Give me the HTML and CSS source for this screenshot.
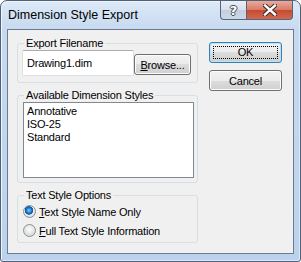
FILE: index.html
```html
<!DOCTYPE html>
<html>
  <head>
    <meta charset="UTF-8">
    <title>Dimension Style Export</title>
    <link rel="stylesheet" href="styles.css">
  </head>
  <body>
    <div class="window">
      <div class="titlebar">
        <span class="title">Dimension Style Export</span>
        <div class="caption">
          <div class="cap-btn help"><span class="help-glyph">?</span></div>
          <div class="cap-btn close">
            <svg width="14" height="12" viewBox="0 0 14 12">
              <path d="M2 1.5 L12 10.5 M12 1.5 L2 10.5" stroke="#3b2a28" stroke-width="4.4" stroke-linecap="square"/>
              <path d="M2 1.5 L12 10.5 M12 1.5 L2 10.5" stroke="#fff" stroke-width="2.4" stroke-linecap="square"/>
            </svg>
          </div>
        </div>
      </div>
      <div class="client">
        <div class="main">
          <fieldset class="group">
            <legend>Export Filename</legend>
            <div class="file-row">
              <div class="textbox">Drawing1.dim</div>
              <div class="button browse"><span><u>B</u>rowse...</span></div>
            </div>
          </fieldset>
          <fieldset class="group">
            <legend>Available Dimension Styles</legend>
            <div class="list-wrap">
              <div class="listbox">
                <div class="item">Annotative</div>
                <div class="item">ISO-25</div>
                <div class="item">Standard</div>
              </div>
            </div>
          </fieldset>
          <fieldset class="group">
            <legend>Text Style Options</legend>
            <div class="options">
              <div class="radio-row"><span class="radio checked"></span><span><u>T</u>ext Style Name Only</span></div>
              <div class="radio-row"><span class="radio"></span><span><u>F</u>ull Text Style Information</span></div>
            </div>
          </fieldset>
        </div>
        <div class="side">
          <div class="button default"><span class="focus">OK</span></div>
          <div class="button">Cancel</div>
        </div>
      </div>
    </div>
  </body>
</html>
```

FILE: styles.css
```css
html, body {
  margin: 0;
}
body {
  background-color: #fff;
  width: 301px;
  height: 262px;
  overflow: hidden;
  font-family: "Liberation Sans", Arial, sans-serif;
  font-size: 11px;
  letter-spacing: -0.2px;
  color: #000;
}
.window {
  box-sizing: border-box;
  width: 301px;
  height: 262px;
  border: 1px solid #4f6078;
  border-radius: 7px 7px 3px 3px;
  background: linear-gradient(#dde9f7, #c6d9ef 30px, #bcd2ec);
  box-shadow: inset 1px 1px 0 #eef5fc, inset -1px -1px 0 #dce8f5;
  padding: 0 6px 7px 6px;
  display: flex;
  flex-direction: column;
}
.titlebar {
  height: 28px;
  display: flex;
  align-items: flex-start;
}
.title {
  flex: 1;
  font-size: 12.5px;
  letter-spacing: 0;
  line-height: 16px;
  padding: 6px 0 0 1px;
}
.caption {
  display: flex;
  margin-right: 1px;
}
.cap-btn {
  box-sizing: border-box;
  height: 19px;
  border: 1px solid #56657a;
  border-top: none;
  display: flex;
  align-items: center;
  justify-content: center;
}
.help {
  width: 26px;
  border-right: none;
  border-radius: 0 0 0 4px;
  background: linear-gradient(#eaf0f7, #d6e0ec 50%, #c3cfdd 50%, #ccd8e6);
}
.help-glyph {
  font-family: "DejaVu Sans", sans-serif;
  font-weight: bold;
  font-size: 13px;
  color: #fff;
  text-shadow: 1px 0 0 #3e4a5a, -1px 0 0 #3e4a5a, 0 1px 0 #3e4a5a, 0 -1px 0 #3e4a5a;
}
.close {
  width: 47px;
  border-radius: 0 0 4px 0;
  background: linear-gradient(#e9a99b, #d77a66 50%, #c44a31 50%, #d0694f);
}
.client {
  flex: 1;
  border: 1px solid #6b7c91;
  background-color: #f0f0f0;
  display: flex;
  align-items: flex-start;
  padding: 7px 0 0 9px;
}
.main {
  width: 181px;
  display: flex;
  flex-direction: column;
  gap: 6px;
}
.group {
  margin: 0;
  padding: 0;
  min-width: 0;
  border: 1px solid #d5dfe5;
  border-radius: 3px;
}
.group legend {
  margin-left: 6px;
  padding: 0 2px;
  line-height: 13px;
}
.file-row {
  display: flex;
  align-items: flex-end;
  padding: 0 0 6px 4px;
}
.textbox {
  box-sizing: border-box;
  width: 112px;
  height: 26px;
  background-color: #fff;
  border: 1px solid #dbdfe6;
  border-top-color: #abadb3;
  border-radius: 2px;
  padding-left: 4px;
  line-height: 24px;
}
.button {
  box-sizing: border-box;
  width: 73px;
  height: 21px;
  border: 1px solid #707070;
  border-radius: 3px;
  background: linear-gradient(#f2f2f2, #ebebeb 50%, #dddddd 50%, #cfcfcf);
  box-shadow: inset 0 0 0 1px #fcfcfc;
  display: flex;
  align-items: center;
  justify-content: center;
}
.browse {
  width: 57px;
  margin-bottom: 1px;
}
.list-wrap {
  padding: 0 0 4px 5px;
}
.listbox {
  box-sizing: border-box;
  width: 171px;
  height: 76px;
  background-color: #fff;
  border: 1px solid #828790;
  padding: 2px 3px;
}
.item {
  line-height: 13px;
}
.options {
  padding: 0 0 2px 5px;
}
.radio-row {
  height: 19px;
  display: flex;
  align-items: center;
  gap: 3px;
}
.radio {
  box-sizing: border-box;
  width: 13px;
  height: 13px;
  border-radius: 50%;
  border: 1px solid #8e8f8f;
  background: radial-gradient(circle at 50% 40%, #fdfdfd, #e1e1e1 60%, #cfcfcf);
}
.radio.checked {
  background: radial-gradient(circle at 45% 40%, #8fd3ff 0, #2a8fe0 2px, #115ba8 3.5px, #1f5f9a 4px, #f4f4f4 4.6px, #dcdcdc 6px);
}
.side {
  margin-left: 11px;
  padding-top: 5px;
  display: flex;
  flex-direction: column;
  gap: 7px;
}
.default {
  border-color: #3c7fb1;
  box-shadow: inset 0 0 0 1px #b5e4f8;
}
.focus {
  box-sizing: border-box;
  width: 65px;
  height: 13px;
  border: 1px dotted #000;
  text-align: center;
  line-height: 11px;
}
```
